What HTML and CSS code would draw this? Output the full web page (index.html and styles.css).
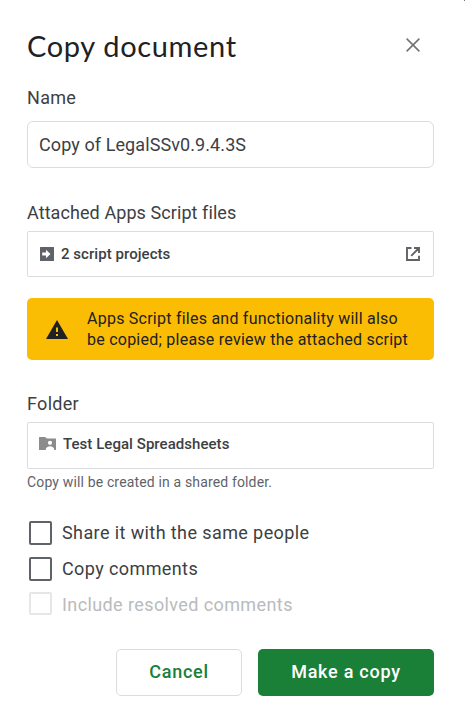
FILE: index.html
```html
<!DOCTYPE html>
<html lang="en">
<head>
<meta charset="utf-8">
<title>Copy document</title>
<link rel="stylesheet" href="styles.css">
</head>
<body>
<main class="dialog">
  <span class="corner"></span>
  <header class="header">
    <h1 class="title">Copy document</h1>
    <svg class="close" viewBox="0 0 14 14"><path d="M.6.6 13.4 13.4M13.4.6.6 13.4"/></svg>
  </header>
  <section class="field name">
    <div class="label">Name</div>
    <div class="box input">Copy of LegalSSv0.9.4.3S</div>
  </section>
  <section class="field scripts">
    <div class="label attached">Attached Apps Script files</div>
    <div class="box row">
      <svg class="script-icon" viewBox="0 0 14 14"><path fill-rule="evenodd" d="M.5 0h13q.5 0 .5.5v13q0 .5-.5.5H.5q-.5 0-.5-.5V.5Q0 0 .5 0zM6 2.8v2.7H2.2v3H6v2.7L10.5 7z"/></svg>
      <span class="item">2 script projects</span>
      <svg class="open-icon" viewBox="0 0 14 14"><path d="M5.5 1H1v12h12V8.8M8 1h5v5M13 1 5.2 8.8"/></svg>
    </div>
  </section>
  <section class="warning">
    <svg class="warn-icon" viewBox="0 0 22 19"><path fill-rule="evenodd" d="M11 0 22 19H0zM10 7.5v4.5h2V7.500zm0 6.500v2h2v-2z"/></svg>
    <p class="warn-text">Apps Script files and functionality will also<br>be copied; please review the attached script</p>
  </section>
  <section class="field folder">
    <div class="label">Folder</div>
    <div class="box row">
      <svg class="folder-icon" viewBox="0 0 17 13"><path fill-rule="evenodd" d="M.5 0H6l2 1.600h8.500q.5 0 .5.500V12.500q0 .5-.5.500H.5q-.5 0-.5-.5V.5Q0 0 .5 0zM11 3.700a2.100 2.100 0 1 0 0 4.200 2.100 2.100 0 1 0 0-4.200zM6.700 13h8.600c0-5-8.600-5-8.600 0z"/></svg>
      <span class="item">Test Legal Spreadsheets</span>
    </div>
    <div class="hint">Copy will be created in a shared folder.</div>
  </section>
  <section class="options">
    <div class="option"><span class="check"></span><span>Share it with the same people</span></div>
    <div class="option"><span class="check"></span><span>Copy comments</span></div>
    <div class="option disabled"><span class="check"></span><span>Include resolved comments</span></div>
  </section>
  <footer class="actions">
    <button class="btn cancel">Cancel</button>
    <button class="btn primary">Make a copy</button>
  </footer>
</main>
</body>
</html>
```
FILE: styles.css
```css
* { box-sizing: border-box; }
body { margin: 0; background: #fff; color: #3c4043; font-family: Roboto, "Liberation Sans", sans-serif; }
.dialog { position: relative; width: 465px; height: 721px; padding: 26px 31px 0 27px; overflow: hidden; }
.corner { position: absolute; top: 0; right: 0; width: 1px; height: 1px; background: #777; }
svg { display: block; flex: none; }
.header { display: flex; justify-content: space-between; height: 60px; padding-right: 14px; }
.title { margin: 0; font: 400 29px/39px Lato, sans-serif; color: #202124; letter-spacing: .65px; white-space: nowrap; }
.close { width: 14px; height: 14px; margin-top: 12px; fill: none; stroke: #747474; stroke-width: 1.6; }
.label { height: 24px; font-size: 18px; line-height: 24px; letter-spacing: .3px; white-space: nowrap; }
.attached { letter-spacing: .08px; }
.box { display: flex; align-items: center; border: 1px solid #dadce0; }
.input { height: 47px; margin-top: 11px; padding-left: 11px; border-radius: 6px; font-size: 18px; letter-spacing: .09px; }
.scripts { margin-top: 33px; }
.row { height: 46px; margin-top: 6px; padding: 0 13px 0 12px; border-radius: 2px; }
.item { font-size: 15px; font-weight: 500; letter-spacing: .05px; }
.script-icon { width: 14px; height: 14px; margin-right: 7px; fill: #5f6368; }
.open-icon { width: 14px; height: 14px; margin-left: auto; fill: none; stroke: #5f6368; stroke-width: 1.9; }
.warning { display: flex; align-items: center; height: 62px; margin-top: 21px; padding-left: 19px; border-radius: 5px; background: #fbbc04; color: #202124; }
.warn-icon { width: 22px; height: 19px; margin-right: 19px; fill: #202124; }
.warn-text { margin: 0; font-size: 16px; line-height: 21px; letter-spacing: .24px; white-space: nowrap; }
.folder { margin-top: 32px; }
.folder .row { height: 47px; align-items: flex-start; padding-left: 11px; }
.folder .item { line-height: 43px; }
.folder-icon { width: 17px; height: 13px; margin: 14px 7px 0 0; fill: #8c8c8c; }
.hint { height: 26px; font-size: 14px; line-height: 26px; color: #5f6368; letter-spacing: .15px; }
.options { margin-top: 19px; }
.option { display: flex; align-items: center; height: 36px; padding-left: 2px; font-size: 18px; letter-spacing: .4px; white-space: nowrap; }
.check { position: relative; top: 1px; width: 23px; height: 24px; margin-right: 10px; border: 2px solid #5f6368; border-radius: 2px; }
.disabled { color: #b9bbbc; }
.disabled .check { height: 23px; margin-bottom: 3px; border-color: #e6e6e6; }
.actions { display: flex; justify-content: flex-end; gap: 16px; margin-top: 27px; }
.btn { height: 47px; padding: 0 0 2px; border-radius: 5px; font: 500 18px/24px Roboto, sans-serif; letter-spacing: .75px; white-space: nowrap; }
.cancel { width: 126px; border: 1px solid #dadce0; background: #fff; color: #188038; }
.primary { width: 176px; border: 0; background: #1a8038; color: #fff; }
```
